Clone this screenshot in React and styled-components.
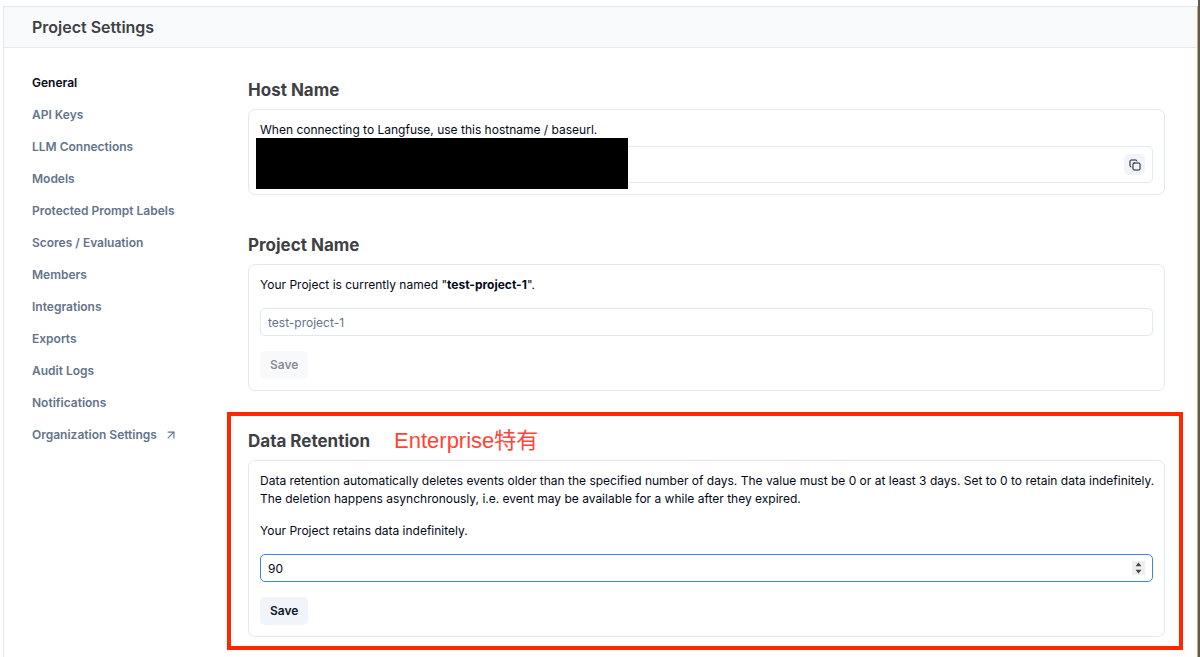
import React from "react";
import styled, { createGlobalStyle } from "styled-components";
import { ArrowUpRight, Copy } from "lucide-react";

const navItems = [
  "API Keys",
  "LLM Connections",
  "Models",
  "Protected Prompt Labels",
  "Scores / Evaluation",
  "Members",
  "Integrations",
  "Exports",
  "Audit Logs",
  "Notifications",
];

const spinArrows =
  "data:image/svg+xml,%3Csvg xmlns='http://www.w3.org/2000/svg' viewBox='0 0 13 14'%3E%3Cpath d='M6.5 1.6L9.5 5.2H3.5zM6.5 12.4L9.5 8.8H3.5z' fill='%23454545'/%3E%3C/svg%3E";

const App = () => {
  return (
    <>
      <GlobalStyle />
      <Page>
        <Panel>
          <PageHeader>
            <PageTitle>Project Settings</PageTitle>
          </PageHeader>
          <Body>
            <SideNav aria-label="Project settings">
              <NavLink href="#general" $active aria-current="page">
                General
              </NavLink>
              {navItems.map((item) => (
                <NavLink href="#" key={item}>
                  {item}
                </NavLink>
              ))}
              <NavLink href="#">
                Organization Settings
                <ArrowUpRight size={14} />
              </NavLink>
            </SideNav>
            <Content>
              <Section>
                <SectionHeader>
                  <SectionTitle>Host Name</SectionTitle>
                </SectionHeader>
                <Card>
                  <HostText>
                    When connecting to Langfuse, use this hostname / baseurl.
                  </HostText>
                  <CodeBox>
                    <CopyButton type="button" aria-label="Copy host name">
                      <Copy size={12} />
                    </CopyButton>
                  </CodeBox>
                  <Redaction />
                </Card>
              </Section>
              <Section>
                <SectionHeader>
                  <SectionTitle>Project Name</SectionTitle>
                </SectionHeader>
                <Card>
                  <Text id="project-name">
                    Your Project is currently named "<b>test-project-1</b>".
                  </Text>
                  <Input
                    type="text"
                    placeholder="test-project-1"
                    aria-labelledby="project-name"
                  />
                  <SaveButton type="button" disabled>
                    Save
                  </SaveButton>
                </Card>
              </Section>
              <Section>
                <SectionHeader>
                  <SectionTitle>Data Retention</SectionTitle>
                  <Note>Enterprise特有</Note>
                </SectionHeader>
                <Card>
                  <LongText>
                    Data retention automatically deletes events older than the
                    specified number of days. The value must be 0 or at least 3
                    days. Set to 0 to retain data indefinitely.
                    <br />
                    The deletion happens asynchronously, i.e. event may be
                    available for a while after they expired.
                  </LongText>
                  <Text id="retention">
                    Your Project retains data indefinitely.
                  </Text>
                  <Input
                    type="number"
                    defaultValue="90"
                    $active
                    aria-labelledby="retention"
                  />
                  <SaveButton type="button">Save</SaveButton>
                </Card>
                <Highlight />
              </Section>
            </Content>
          </Body>
        </Panel>
      </Page>
    </>
  );
};

export default App;

const GlobalStyle = createGlobalStyle`
  *, *::before, *::after {
    box-sizing: border-box;
  }
  body {
    margin: 0;
    background: #ffffff;
    color: #020817;
    font-family: Inter, "Noto Sans CJK JP", sans-serif;
    font-size: 12px;
    line-height: 18px;
  }
`;
const Page = styled.div`
  min-height: 100vh;
  display: flex;
  flex-direction: column;
  padding-top: 6px;
  border-right: 2px solid #5b5a58;
`;
const Panel = styled.main`
  flex: 1;
  margin-left: 3px;
  border-left: 1px solid #e2e8f0;
  border-right: 1px solid #dcaa5c;
`;
const PageHeader = styled.header`
  padding: 8px 28px;
  background: #f8fafc;
  border-top: 1px solid #e2e8f0;
  border-bottom: 1px solid #e2e8f0;
`;
const PageTitle = styled.h1`
  margin: 0;
  color: #3f3f46;
  font-size: 16px;
  line-height: 24px;
  font-weight: 600;
`;
const Body = styled.div`
  display: flex;
  padding: 25px 32px 20px 28px;
`;
const SideNav = styled.nav`
  width: 216px;
  flex-shrink: 0;
  display: flex;
  flex-direction: column;
  gap: 14px;
  padding-top: 1px;
`;
const NavLink = styled.a`
  display: flex;
  align-items: center;
  gap: 7px;
  color: ${(props) => (props.$active ? "#020817" : "#64748b")};
  font-weight: 600;
  text-decoration: none;
`;
const Content = styled.div`
  flex: 1;
  min-width: 0;
  display: flex;
  flex-direction: column;
  gap: 38px;
  padding-top: 5px;
`;
const Section = styled.section`
  position: relative;
`;
const SectionHeader = styled.div`
  display: flex;
  align-items: center;
  gap: 24px;
  margin-bottom: 7px;
`;
const SectionTitle = styled.h2`
  margin: 0;
  color: #3f3f46;
  font-size: 17px;
  line-height: 24px;
  font-weight: 700;
`;
const Note = styled.span`
  color: #ff4438;
  font-family: "Liberation Sans", "Noto Sans CJK JP", sans-serif;
  font-size: 22px;
  line-height: 24px;
`;
const Card = styled.div`
  position: relative;
  padding: 11px;
  border: 1px solid #e2e8f0;
  border-radius: 7px;
`;
const Text = styled.p`
  margin: 0 0 14px;
`;
const HostText = styled(Text)`
  margin-bottom: 7px;
`;
const LongText = styled(Text)`
  @media only screen and (min-width: 1200px) {
    white-space: nowrap;
  }
`;
const CodeBox = styled.div`
  display: flex;
  justify-content: flex-end;
  padding: 7px;
  border: 1px solid #e2e8f0;
  border-radius: 5px;
`;
const CopyButton = styled.button`
  width: 21px;
  height: 21px;
  display: flex;
  align-items: center;
  justify-content: center;
  padding: 0;
  border: 0;
  border-radius: 5px;
  background: #f1f5f9;
  color: #0f172a;
`;
const Redaction = styled.div`
  position: absolute;
  top: 28px;
  left: 7px;
  width: 372px;
  height: 51px;
  background: #000000;
`;
const Input = styled.input`
  display: block;
  width: 100%;
  height: 28px;
  margin: 0 0 15px;
  padding: 0 7px;
  border: 1px solid ${(props) => (props.$active ? "#3b82f6" : "#e2e8f0")};
  border-radius: 5px;
  outline: none;
  background: #ffffff;
  color: #020817;
  font: inherit;
  &::placeholder {
    color: #64748b;
  }
  &::-webkit-inner-spin-button {
    appearance: none;
    width: 13px;
    height: 14px;
    background: #efefef url("${spinArrows}") center / 13px 14px no-repeat;
    opacity: 1;
  }
`;
const SaveButton = styled.button`
  height: 28px;
  display: block;
  padding: 0 10px;
  border: 0;
  border-radius: 5px;
  background: #f1f5f9;
  color: #0f172a;
  font: inherit;
  font-weight: 600;
  &:disabled {
    opacity: 0.5;
  }
`;
const Highlight = styled.div`
  position: absolute;
  inset: -17px -18px -13px -21px;
  border: 4px solid #ff2600;
  pointer-events: none;
`;
